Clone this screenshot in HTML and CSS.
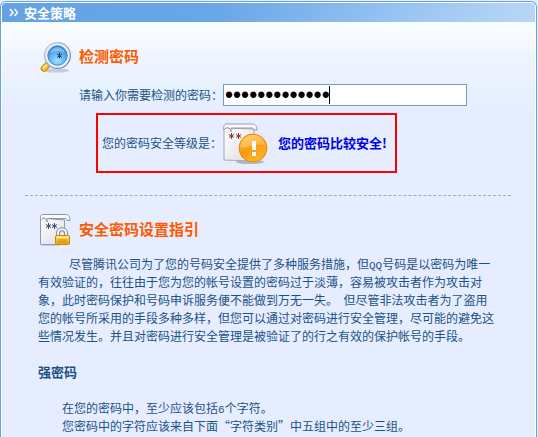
FILE: index.html
```html
<!DOCTYPE html>
<html lang="zh-CN">
<head>
<meta charset="utf-8">
<title>安全策略</title>
<link rel="stylesheet" href="styles.css">
</head>
<body>
<main class="panel">
  <header class="panel-header">
    <svg class="chevrons" width="10" height="9" viewBox="0 0 10 9" aria-hidden="true"><path d="M1 1l3 3.500-3 3.500M5.500 1l3 3.500-3 3.500" fill="none" stroke="#fff" stroke-width="1.500"/></svg>
    <h1>安全策略</h1>
  </header>

  <div class="panel-body">
    <section class="check">
      <div class="section-title">
        <svg width="34" height="34" viewBox="0 0 34 34" aria-hidden="true">
          <defs>
            <radialGradient id="lens" cx=".5" cy=".75" r=".75"><stop offset="0" stop-color="#a4e5ff"/><stop offset=".5" stop-color="#61b5f6"/><stop offset="1" stop-color="#277dcd"/></radialGradient>
            <linearGradient id="rim" x2="1" y2="1"><stop offset="0" stop-color="#c3cfdf"/><stop offset=".45" stop-color="#8fa9ca"/><stop offset="1" stop-color="#5a7aa3"/></linearGradient>
            <linearGradient id="gold" x2="0" y2="1"><stop offset="0" stop-color="#ffe26a"/><stop offset="1" stop-color="#f29a08"/></linearGradient>
          </defs>
          <ellipse cx="18" cy="30.500" rx="13" ry="2" fill="#8794a6" opacity=".4"/>
          <path d="M12 22l-3 3" stroke="#8794a6" stroke-width="3"/>
          <path d="M9 25.500L6 28.500" stroke="#c88710" stroke-width="6.500" stroke-linecap="round"/>
          <path d="M9 25.500L6 28.500" stroke="#ffc62d" stroke-width="4.500" stroke-linecap="round"/>
          <path d="M8 25L5.500 27.500" stroke="#fff0a2" stroke-width="1.500" stroke-linecap="round"/>
          <circle cx="19.500" cy="15.500" r="13.500" fill="url(#rim)"/>
          <circle cx="19.500" cy="15.500" r="12.300" fill="#e6eff9"/>
          <circle cx="19.500" cy="15.500" r="9.700" fill="url(#lens)" stroke="#4b85bf"/>
          <path d="M12 13c3-8 12-8 15 0-5-3-10-2-15 0z" fill="#fff" opacity=".35"/>
          <path d="M21.500 12.500v6M19 14l5 3.500M24 14l-5 3.500" stroke="#153e70"/>
        </svg>
        <h2>检测密码</h2>
      </div>
      <div class="password-row">
        <label for="password">请输入你需要检测的密码：</label>
        <div class="field">
          <input id="password" type="password" value="abcdefghijklm">
          <span class="caret"></span>
        </div>
      </div>
      <div class="result">
        <span>您的密码安全等级是：</span>
        <svg width="46" height="42" viewBox="0 0 46 42" aria-hidden="true">
          <defs>
            <linearGradient id="paper" x2="1" y2="1"><stop offset="0" stop-color="#fff"/><stop offset="1" stop-color="#dcdde3"/></linearGradient>
            <linearGradient id="orange" x1=".2" x2=".7" y2="1"><stop offset="0" stop-color="#ffc34d"/><stop offset=".5" stop-color="#fb9b12"/><stop offset="1" stop-color="#f7b92a"/></linearGradient>
          </defs>
          <ellipse cx="28" cy="40" rx="14" ry="2" fill="#78716d" opacity=".45"/>
          <path d="M2 6v32l30 1V7z" fill="url(#paper)" stroke="#a6a8ae"/>
          <path d="M2 8C1 3 3 2 5 2h25c4 0 5 3 5 6h-3c0-1-1-2-2-2H9v4C8 5 5 4 2 8z" fill="#fafafc" stroke="#9c9da3"/>
          <path d="M9.500 11v6M7 12.500l5 3M12 12.500l-5 3M16.500 11v6M14 12.500l5 3M19 12.500l-5 3" stroke="#8d3438"/>
          <circle cx="31" cy="26" r="14.300" fill="#e98404"/>
          <circle cx="31" cy="26" r="13.300" fill="url(#orange)"/>
          <path d="M19 25c1-16 23-16 24-2-8-2-16 3-24 2z" fill="#ffe09a" opacity=".4"/>
          <path d="M30 19h4v9h-4zM30 30h4v4h-4z" fill="#fff"/>
        </svg>
        <strong>您的密码比较安全!</strong>
      </div>
    </section>

    <section class="guide">
      <div class="section-title">
        <svg width="34" height="34" viewBox="0 0 34 34" aria-hidden="true">
          <path d="M3 31h19v2H3z" fill="#8490a3" opacity=".3"/>
          <path d="M2.500 5v26.500h24V7z" fill="url(#paper)" stroke="#8d9cb0"/>
          <path d="M2.500 7C2 3 3 1.500 5 1.500h22c4 0 5 2 5 6h-3c0-2-1-2-2-2H9V9C8 4 5 4 2.500 7z" fill="#fafcff" stroke="#8798ae"/>
          <path d="M10.500 10v6M8 11.500l5 3M13 11.500l-5 3M16.500 10v6M14 11.500l5 3M19 11.500l-5 3" stroke="#31506f"/>
          <path d="M20 24v-4c0-5 8-5 8 0v4" fill="none" stroke="#7f8a99" stroke-width="4"/>
          <path d="M20 24v-4c0-5 8-5 8 0v4" fill="none" stroke="#eef1f5" stroke-width="2"/>
          <rect x="17.500" y="22.500" width="14" height="9" rx="1" fill="url(#gold)" stroke="#cf850e"/>
          <path d="M19 24.500h11" stroke="#fff2a1"/>
          <path d="M20 27h9M20 29h9" stroke="#d78c0c"/>
        </svg>
        <h2>安全密码设置指引</h2>
      </div>
      <div class="guide-text">
        <p class="intro">尽管腾讯公司为了您的号码安全提供了多种服务措施，但<span class="latin">QQ</span>号码是以密码为唯一<br>有效验证的，往往由于您为您的帐号设置的密码过于淡薄，容易被攻击者作为攻击对<br>象，此时密码保护和号码申诉服务便不能做到万无一失。&nbsp; 但尽管非法攻击者为了盗用<br>您的帐号所采用的手段多种多样，但您可以通过对密码进行安全管理，尽可能的避免这<br>些情况发生。并且对密码进行安全管理是被验证了的行之有效的保护帐号的手段。</p>
        <h3>强密码</h3>
        <p class="rules">在您的密码中，至少应该包括<span class="latin">6</span>个字符。<br>您密码中的字符应该来自下面“字符类别”中五组中的至少三组。</p>
      </div>
    </section>
  </div>
</main>
</body>
</html>
```
FILE: styles.css
```css
* {
  box-sizing: border-box;
}

body {
  margin: 0;
  padding: 1px 1px 0 0;
  background: #e6edff;
  color: #1c5285;
  font: 12px/18px "Noto Sans CJK SC", sans-serif;
}

h1, h2, h3, p {
  margin: 0;
}

.panel {
  min-height: calc(100vh - 1px);
  padding: 1px 1px 0;
  border: 1px solid #69a1dc;
  border-bottom: 0;
  border-radius: 6px 6px 0 0;
  background: #fff;
}

.panel-header {
  display: flex;
  align-items: center;
  gap: 5px;
  height: 19px;
  padding-left: 7px;
  border-radius: 4px 4px 0 0;
  background: linear-gradient(170deg, transparent 50%, rgba(255, 255, 255, 0.12)), linear-gradient(90deg, #64a2e4 0%, #6aa7e7 40%, #8fbff0 72%, #b0d2f5 100%);
}

.panel-header h1 {
  color: #fff;
  font-size: 13px;
  line-height: 18px;
}

.panel-body {
  min-height: calc(100vh - 22px);
  padding: 18px 24px 0 23px;
  background: linear-gradient(#f8feff 0, #f7f8ff 20px, #eef5ff 32px, #f0f2ff 48px, #e6f2ff 64px, #e6edff 88px);
}

.section-title {
  display: flex;
  align-items: center;
  gap: 7px;
  padding-left: 13px;
}

.section-title h2 {
  padding-bottom: 2px;
  color: #ff5a00;
  font-size: 15px;
  line-height: 18px;
}

.check {
  padding-bottom: 22px;
  border-bottom: 1px dashed #9daabd;
}

.password-row {
  display: flex;
  align-items: center;
  margin: 10px 0 7px 54px;
}

.field {
  position: relative;
  width: 244px;
}

.field input {
  display: block;
  width: 100%;
  height: 22px;
  padding: 0 1px;
  border: 1px solid #7599bf;
  outline: 0;
  background: #fff;
  color: #000;
  font: 23px/20px "Liberation Sans", sans-serif;
}

.caret {
  position: absolute;
  top: 2px;
  left: 106px;
  width: 1px;
  height: 18px;
  background: #000;
}

.result {
  display: flex;
  align-items: center;
  width: 301px;
  height: 60px;
  margin-left: 71px;
  padding-left: 4px;
  border: 2px solid #f00;
}

.result strong {
  margin-left: 10px;
  color: #0000e8;
  font-size: 13px;
}

.guide {
  padding-top: 17px;
}

.guide-text {
  padding: 8px 0 0 13px;
  white-space: nowrap;
}

.intro {
  text-indent: 31px;
}

.guide-text h3 {
  margin: 18px 0;
  font-size: 13px;
  line-height: 18px;
}

.rules {
  padding-left: 24px;
}

.latin {
  font: 11px/1 "Liberation Mono", monospace;
}
```
